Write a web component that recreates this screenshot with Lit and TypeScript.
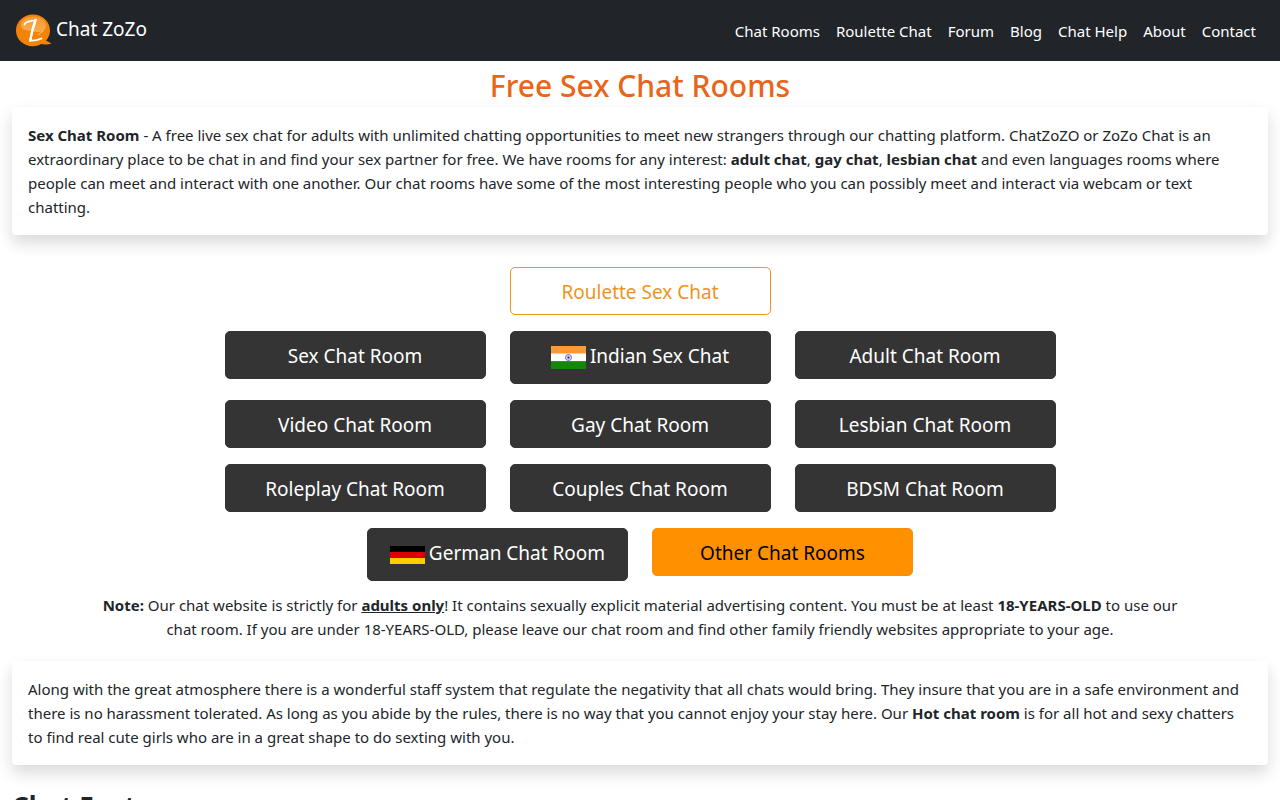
import { LitElement, html, css } from "lit";
import { customElement } from "lit/decorators.js";

const navLinks = ["Chat Rooms", "Roulette Chat", "Forum", "Blog", "Chat Help", "About", "Contact"];

const indiaFlag = html`<svg class="flag" viewBox="0 0 35 35" aria-hidden="true">
  <rect y="6" width="35" height="8" fill="#ff9933" />
  <rect y="13.5" width="35" height="8" fill="#ffffff" />
  <rect y="21.3" width="35" height="7.7" fill="#138808" />
  <circle cx="17.5" cy="17.5" r="3" fill="#eeeefa" stroke="#4a4ab0" stroke-width="0.8" />
  <path d="M17.5 14.5v6M14.5 17.5h6M15.4 15.4l4.2 4.2M19.6 15.4l-4.2 4.2" stroke="#8888d0" stroke-width="0.4" />
  <circle cx="17.5" cy="17.5" r="1" fill="#22228c" />
</svg>`;

const germanyFlag = html`<svg class="flag" viewBox="0 0 35 35" aria-hidden="true">
  <rect y="9" width="35" height="6" fill="#000000" />
  <rect y="15" width="35" height="6" fill="#dd0000" />
  <rect y="21" width="35" height="6" fill="#ffce00" />
</svg>`;

type Room = { label: string; kind?: string; flag?: unknown };

const roomRows: Room[][] = [
  [{ label: "Roulette Sex Chat", kind: "outline" }],
  [{ label: "Sex Chat Room" }, { label: "Indian Sex Chat", flag: indiaFlag }, { label: "Adult Chat Room" }],
  [{ label: "Video Chat Room" }, { label: "Gay Chat Room" }, { label: "Lesbian Chat Room" }],
  [{ label: "Roleplay Chat Room" }, { label: "Couples Chat Room" }, { label: "BDSM Chat Room" }],
  [{ label: "German Chat Room", flag: germanyFlag }, { label: "Other Chat Rooms", kind: "accent" }],
];

@customElement("app-root")
export class AppRoot extends LitElement {
  static styles = css`
    :host {
      display: block;
      background: #fff;
      color: #212529;
      font-family: "Noto Sans", "Open Sans", sans-serif;
      font-size: 15px;
      line-height: 24px;
    }
    * {
      box-sizing: border-box;
    }
    a {
      text-decoration: none;
    }
    .navbar {
      display: flex;
      align-items: center;
      justify-content: space-between;
      padding: 13px 16px;
      background: #212529;
    }
    .brand {
      display: flex;
      align-items: flex-start;
      gap: 4px;
      color: #fff;
      font-size: 19px;
      line-height: 32px;
    }
    .logo {
      width: 36px;
      height: 35px;
    }
    .links {
      display: flex;
      margin: 0;
      padding: 0;
      list-style: none;
    }
    .links a {
      display: block;
      padding: 0 8px;
      color: #fff;
    }
    h1 {
      margin: 6px 0 2px;
      color: #e8651a;
      font-size: 30px;
      line-height: 38px;
      font-weight: 500;
      text-align: center;
    }
    .card {
      margin: 0 12px;
      padding: 16px;
      border-radius: 4px;
      background: #fff;
      box-shadow: 0 8px 16px rgba(0, 0, 0, 0.15);
    }
    .card p {
      margin: 0;
    }
    .rooms {
      display: flex;
      flex-direction: column;
      gap: 16px;
      padding: 32px 12px 12px;
    }
    .row {
      display: flex;
      flex-wrap: wrap;
      align-items: flex-start;
      justify-content: center;
      gap: 16px 24px;
    }
    .btn {
      display: flex;
      align-items: flex-start;
      justify-content: center;
      gap: 4px;
      width: 261px;
      padding: 8px 16px 6px;
      border: 1px solid #343434;
      border-radius: 5px;
      background: #343434;
      color: #fff;
      font-size: 19px;
      line-height: 32px;
    }
    .outline {
      border-color: #f0941a;
      background: #fff;
      color: #f0941a;
    }
    .accent {
      border-color: #ff9100;
      background: #ff9100;
      color: #000;
    }
    .flag {
      width: 35px;
      height: 35px;
      margin-bottom: 2px;
    }
    .note {
      max-width: 1116px;
      margin: 0 auto 20px;
      padding: 0 12px;
      text-align: center;
    }
    h2 {
      margin: 24px 12px 0;
      font-size: 26px;
      line-height: 34px;
      font-weight: 700;
    }
  `;

  render() {
    return html`
      <header class="navbar">
        <a class="brand" href="#">
          <svg class="logo" viewBox="0 0 36 35" aria-hidden="true">
            <defs>
              <linearGradient id="gloss" x1="0" y1="0" x2="0" y2="1">
                <stop offset="0" stop-color="#f9a03c" />
                <stop offset="1" stop-color="#fbb45f" />
              </linearGradient>
            </defs>
            <path d="M17 1.500C26.500 1.500 34 8.500 34 17.500C34 21.500 32.500 25 30 27.500L35.500 30.500C31 31.800 27.500 31.500 25 31C22.500 32.500 20 33.200 17 33.200C7.500 33.200 0 26.500 0 17.500C0 8.500 7.500 1.500 17 1.500Z" fill="#f38307" />
            <path d="M17 3.500C25 3.500 30.500 8 30 13C29.500 18.500 24 20 18 18.500C12 17 6 18 5 13C4 8 9 3.500 17 3.500Z" fill="url(#gloss)" opacity="0.8" />
            <path d="M8.500 11.500C9 8.500 14 8.500 19.500 7C17.500 13 15.500 20 14.200 27.500C18 28 22 27 25.500 25.500" fill="none" stroke="#fff" stroke-width="1.800" stroke-linecap="round" stroke-linejoin="miter" />
            <path d="M19.500 7C17.500 13 15.500 20 14.200 27.500" fill="none" stroke="#fff" stroke-width="2.400" stroke-linecap="round" />
            <path d="M22 22L27.500 17.500" stroke="#ffc27a" stroke-width="1" />
          </svg>
          <span>Chat ZoZo</span>
        </a>
        <nav>
          <ul class="links">
            ${navLinks.map((label) => html`<li><a href="#">${label}</a></li>`)}
          </ul>
        </nav>
      </header>
      <main>
        <h1>Free Sex Chat Rooms</h1>
        <section class="card">
          <p><b>Sex Chat Room</b> - A free live sex chat for adults with unlimited chatting opportunities to meet new strangers through our chatting platform. ChatZoZO or ZoZo Chat is an extraordinary place to be chat in and find your sex partner for free. We have rooms for any interest: <b>adult chat</b>, <b>gay chat</b>, <b>lesbian chat</b> and even languages rooms where people can meet and interact with one another. Our chat rooms have some of the most interesting people who you can possibly meet and interact via webcam or text chatting.</p>
        </section>
        <section class="rooms">
          ${roomRows.map(
            (row) => html`<div class="row">
              ${row.map(
                (room) => html`<a class="btn ${room.kind ?? ""}" href="#">${room.flag ?? ""}<span>${room.label}</span></a>`
              )}
            </div>`
          )}
        </section>
        <p class="note"><b>Note:</b> Our chat website is strictly for <b><u>adults only</u></b>! It contains sexually explicit material advertising content. You must be at least <b>18-YEARS-OLD</b> to use our chat room. If you are under 18-YEARS-OLD, please leave our chat room and find other family friendly websites appropriate to your age.</p>
        <section class="card">
          <p>Along with the great atmosphere there is a wonderful staff system that regulate the negativity that all chats would bring. They insure that you are in a safe environment and there is no harassment tolerated. As long as you abide by the rules, there is no way that you cannot enjoy your stay here. Our <b>Hot chat room</b> is for all hot and sexy chatters to find real cute girls who are in a great shape to do sexting with you.</p>
        </section>
        <h2>Chat Features</h2>
      </main>
    `;
  }
}
